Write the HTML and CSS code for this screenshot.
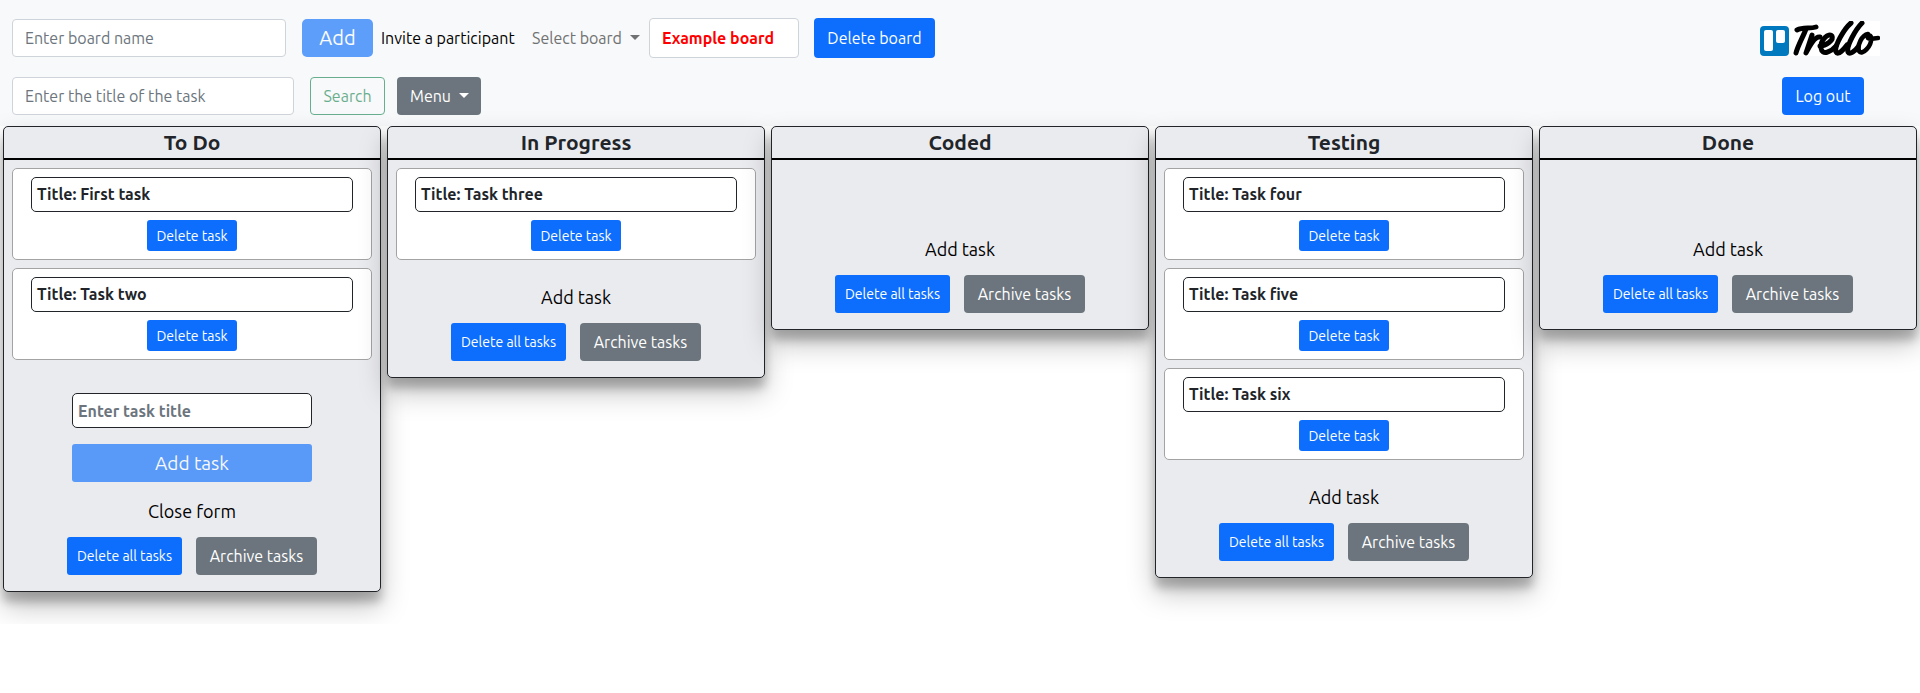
FILE: index.html
```html
<!DOCTYPE html>
<html lang="en">
<head>
<meta charset="utf-8">
<title>Trello</title>
<link rel="stylesheet" href="styles.css">
</head>
<body>
<header class="navbar">
  <div class="bar">
    <form class="board-form">
      <input class="field board-name" type="text" placeholder="Enter board name" aria-label="Board name">
      <button class="btn primary add faded" type="button">Add</button>
    </form>
    <a class="invite" href="#">Invite a participant</a>
    <button class="select-board caret" type="button">Select board</button>
    <input class="field current" type="text" value="Example board" aria-label="Current board">
    <button class="btn primary delete-board" type="button">Delete board</button>
    <a class="logo" href="#" aria-label="Trello">
      <svg viewBox="0 0 120 35" width="120" height="35" aria-hidden="true">
        <rect width="120" height="35" fill="#fff"/>
        <rect y="5" width="29" height="30" rx="4" fill="#0079bf"/>
        <rect x="4" y="9" width="9" height="21" rx="2" fill="#fff"/>
        <rect x="16" y="9" width="9" height="13" rx="2" fill="#fff"/>
        <g fill="none" stroke="#000" stroke-width="5" stroke-linecap="round" stroke-linejoin="round">
          <path d="M37 9C43 6 50 8 56 6M46 8C43 16 38 24 36 32"/>
          <path d="M52 14L46 32C50 24 55 15 60 16"/>
          <path d="M60 25C66 25 74 19 72 15C69 11 60 19 61 27C62 35 71 31 76 25"/>
          <path d="M91 2C84 8 74 25 76 31C78 35 84 28 87 24"/>
          <path d="M102 2C96 8 86 25 88 31C90 34 95 30 98 26"/>
          <path d="M108 13C102 14 97 24 99 30C102 35 112 25 111 17C111 13 107 15 108 17C110 19 114 17 118 17" stroke-width="4.6"/>
        </g>
      </svg>
    </a>
  </div>
  <div class="bar second">
    <input class="field search" type="search" placeholder="Enter the title of the task" aria-label="Task title">
    <button class="btn outline" type="button">Search</button>
    <button class="btn secondary menu caret" type="button">Menu</button>
    <button class="btn primary logout" type="button">Log out</button>
  </div>
</header>
<main class="board">
  <section class="column">
    <h2 class="heading">To Do</h2>
    <div class="list">
      <article class="card"><p class="title">Title: First task</p><button class="btn primary small" type="button">Delete task</button></article>
      <article class="card"><p class="title">Title: Task two</p><button class="btn primary small" type="button">Delete task</button></article>
    </div>
    <form class="task-form">
      <input class="task-input" type="text" placeholder="Enter task title" aria-label="New task title">
      <button class="btn primary faded submit" type="button">Add task</button>
    </form>
    <button class="toggle" type="button">Close form</button>
    <div class="actions"><button class="btn primary all" type="button">Delete all tasks</button><button class="btn secondary" type="button">Archive tasks</button></div>
  </section>
  <section class="column">
    <h2 class="heading">In Progress</h2>
    <div class="list">
      <article class="card"><p class="title">Title: Task three</p><button class="btn primary small" type="button">Delete task</button></article>
    </div>
    <button class="toggle" type="button">Add task</button>
    <div class="actions"><button class="btn primary all" type="button">Delete all tasks</button><button class="btn secondary" type="button">Archive tasks</button></div>
  </section>
  <section class="column">
    <h2 class="heading">Coded</h2>
    <div class="list"></div>
    <button class="toggle" type="button">Add task</button>
    <div class="actions"><button class="btn primary all" type="button">Delete all tasks</button><button class="btn secondary" type="button">Archive tasks</button></div>
  </section>
  <section class="column">
    <h2 class="heading">Testing</h2>
    <div class="list">
      <article class="card"><p class="title">Title: Task four</p><button class="btn primary small" type="button">Delete task</button></article>
      <article class="card"><p class="title">Title: Task five</p><button class="btn primary small" type="button">Delete task</button></article>
      <article class="card"><p class="title">Title: Task six</p><button class="btn primary small" type="button">Delete task</button></article>
    </div>
    <button class="toggle" type="button">Add task</button>
    <div class="actions"><button class="btn primary all" type="button">Delete all tasks</button><button class="btn secondary" type="button">Archive tasks</button></div>
  </section>
  <section class="column">
    <h2 class="heading">Done</h2>
    <div class="list"></div>
    <button class="toggle" type="button">Add task</button>
    <div class="actions"><button class="btn primary all" type="button">Delete all tasks</button><button class="btn secondary" type="button">Archive tasks</button></div>
  </section>
</main>
</body>
</html>
```
FILE: styles.css
```css
* { box-sizing: border-box; }
body {
  margin: 0;
  background: #fff;
  color: #212529;
  font: 16px/24px Ubuntu, "Noto Sans", sans-serif;
}
button, input { font: inherit; color: inherit; margin: 0; }
button { cursor: pointer; white-space: nowrap; }
.navbar {
  display: flex;
  flex-direction: column;
  gap: 19px;
  padding: 18px 40px 11px 12px;
  background: #f8f9fa;
}
.bar { display: flex; align-items: center; height: 40px; }
.second { height: 38px; }
.board-form { display: flex; gap: 16px; }
.field {
  height: 38px;
  padding: 6px 12px;
  border: 1px solid #ced4da;
  border-radius: 4px;
  background: #fff;
}
.field::placeholder, .task-input::placeholder { color: #6c757d; opacity: 1; }
.board-name { width: 274px; }
.search { width: 282px; margin-right: 16px; appearance: none; }
.btn {
  height: 38px;
  padding: 0 12px;
  border: 1px solid transparent;
  border-radius: 4px;
  color: #fff;
}
.primary { background: #0d6efd; }
.secondary { background: #6c757d; }
.faded { opacity: .65; }
.add { width: 71px; font-size: 20px; border-radius: 5px; }
.outline { width: 75px; background: none; border-color: #198754; color: #198754; opacity: .65; }
.caret::after {
  content: "";
  display: inline-block;
  margin-left: 8px;
  vertical-align: 4px;
  border: 5px solid transparent;
  border-top-color: currentColor;
  border-bottom: 0;
}
.invite { width: 151px; margin-left: 8px; color: #000; text-decoration: none; white-space: nowrap; }
.select-board { width: 110px; padding: 0; border: 0; background: none; color: #707172; text-align: left; }
.current { width: 150px; height: 40px; margin: 0 15px 0 7px; color: #f00; font-weight: 700; }
.delete-board { width: 121px; height: 40px; padding: 0; }
.logo { display: flex; margin-left: auto; }
.menu { width: 84px; margin-left: 12px; }
.logout { width: 82px; margin: 0 16px 0 auto; }
.board {
  display: grid;
  grid-template-columns: repeat(5, minmax(0, 1fr));
  align-items: start;
  gap: 6px;
  padding: 0 3px 32px;
}
.column {
  display: flex;
  flex-direction: column;
  align-items: center;
  padding-bottom: 16px;
  border: 1px solid #212529;
  border-radius: 5px;
  background: #eaebef;
  box-shadow: 0 14px 28px rgba(0, 0, 0, .25), 0 10px 10px rgba(0, 0, 0, .22);
}
.heading {
  align-self: stretch;
  margin: 0;
  border-bottom: 2px solid #000;
  font-size: 21px;
  line-height: 31px;
  text-align: center;
}
.list {
  display: flex;
  flex-direction: column;
  align-self: stretch;
  gap: 8px;
  min-height: 52px;
  padding: 8px 8px 0;
}
.card {
  display: flex;
  flex-direction: column;
  align-items: center;
  gap: 8px;
  padding: 8px 18px;
  border: 1px solid #a3a3a3;
  border-radius: 5px;
  background: #fff;
}
.title {
  align-self: stretch;
  margin: 0;
  padding: 0 5px;
  border: 1px solid #212529;
  border-radius: 5px;
  font-weight: 700;
  line-height: 33px;
}
.small { width: 90px; height: 31px; padding: 0; border-radius: 3px; font-size: 14px; }
.task-form { display: flex; flex-direction: column; gap: 16px; width: 240px; margin: 33px 0 -8px; }
.task-input {
  width: 100%;
  height: 35px;
  padding: 0 5px;
  border: 1px solid #212529;
  border-radius: 5px;
  background: #fff;
  font-weight: 700;
}
.submit { font-size: 19px; border-radius: 3px; }
.toggle { margin: 24px 0 12px; padding: 0; border: 0; background: none; color: #000; font-size: 18px; line-height: 27px; }
.actions { display: flex; gap: 14px; }
.actions .btn { width: 121px; padding: 0; }
.actions .all { width: 115px; border-radius: 3px; font-size: 14px; }
```
